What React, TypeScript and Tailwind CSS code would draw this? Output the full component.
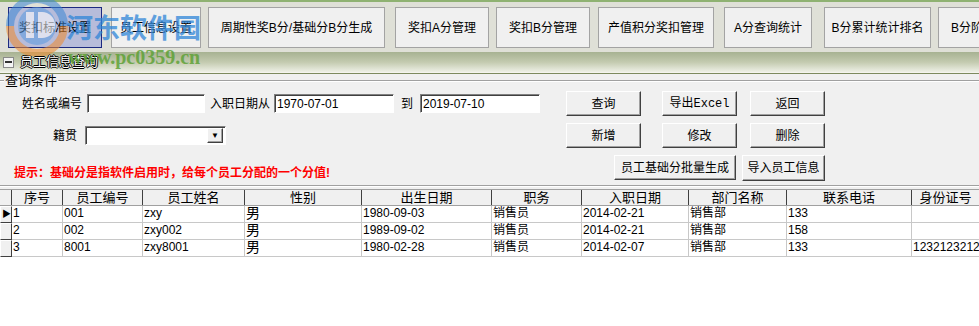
import React from 'react';

const FONT = 'font-["Liberation_Sans","Noto_Sans_CJK_SC",sans-serif]';

const tabs = [
  { label: '奖扣标准设置', cls: 'ml-[8px] w-[94px]', active: true },
  { label: '员工信息设置', cls: 'ml-[9px] w-[90px]' },
  { label: '周期性奖B分/基础分B分生成', cls: 'ml-[7px] w-[177px]' },
  { label: '奖扣A分管理', cls: 'ml-[10px] w-[94px]' },
  { label: '奖扣B分管理', cls: 'ml-[7px] w-[94px]' },
  { label: '产值积分奖扣管理', cls: 'ml-[8px] w-[116px]' },
  { label: 'A分查询统计', cls: 'ml-[10px] w-[88px]' },
  { label: 'B分累计统计排名', cls: 'ml-[12px] w-[107px]' },
  { label: 'B分阶段统计', cls: 'ml-[7px] w-[100px] justify-start pl-[12px]' },
];

const columns = [
  { title: '序号', w: 'w-[51px]' },
  { title: '员工编号', w: 'w-[80px]' },
  { title: '员工姓名', w: 'w-[102px]' },
  { title: '性别', w: 'w-[117px]' },
  { title: '出生日期', w: 'w-[130px]' },
  { title: '职务', w: 'w-[90px]' },
  { title: '入职日期', w: 'w-[107px]' },
  { title: '部门名称', w: 'w-[98px]' },
  { title: '联系电话', w: 'w-[125px]' },
  { title: '身份证号', w: 'w-[68px]' },
];

const rows = [
  ['1', '001', 'zxy', '男', '1980-09-03', '销售员', '2014-02-21', '销售部', '133', ''],
  ['2', '002', 'zxy002', '男', '1989-09-02', '销售员', '2014-02-21', '销售部', '158', ''],
  ['3', '8001', 'zxy8001', '男', '1980-02-28', '销售员', '2014-02-07', '销售部', '133', '12321232123'],
];

const sunken =
  'h-[19px] bg-white border border-t-[#808080] border-l-[#808080] border-b-white border-r-white shadow-[inset_1px_1px_0_#404040] px-[2px] flex items-center';
const raised =
  'bg-[#f0f0f0] border border-t-white border-l-white border-b-[#404040] border-r-[#404040] shadow-[inset_-1px_-1px_0_#a0a0a0] flex items-center justify-center';

function Btn({ children, cls }: { children: React.ReactNode; cls: string }) {
  return <div className={`${raised} h-[25px] w-[75px] text-[12px] ${cls}`}>{children}</div>;
}

function Watermark() {
  return (
    <div className="absolute left-0 top-0 pointer-events-none">
      <svg width="70" height="60" viewBox="0 0 70 60" className="absolute left-[2px] top-[-4px] opacity-55">
        <path d="M8 30 A27 27 0 0 1 62 30" fill="none" stroke="#3a86d4" strokeWidth="8" />
        <path d="M62 30 A27 27 0 0 1 8 30" fill="none" stroke="#f08a2c" strokeWidth="8" />
        <circle cx="35" cy="30" r="19" fill="#5a9be0" />
        <rect x="24" y="16" width="8" height="26" fill="#ffffff" />
        <path d="M36 16 h4 a13 13 0 0 1 0 26 h-4 z" fill="#ffffff" />
      </svg>
      <div className="absolute left-[66px] top-[12px] text-[27px] leading-[30px] font-bold text-[#2f86d8] opacity-75 font-['Noto_Sans_CJK_SC',sans-serif] whitespace-nowrap">
        河东软件园
      </div>
      <div className="absolute left-[68px] top-[47px] text-[20px] leading-[20px] font-bold text-[#5aa032] opacity-80 font-['Liberation_Serif',serif] whitespace-nowrap">
        www.pc0359.cn
      </div>
    </div>
  );
}

export default function App() {
  return (
    <div className={`relative w-[979px] h-[326px] overflow-hidden bg-white text-black text-[12px] ${FONT}`}>
      {/* top toolbar */}
      <div className="h-[52px] bg-[#dfe0d7] border-t-2 border-[#8fb272] flex items-start pt-[5px] overflow-hidden whitespace-nowrap">
        {tabs.map((t, i) => (
          <div
            key={i}
            className={`${t.cls} shrink-0 h-[41px] flex items-center justify-center text-[12px] border ${
              t.active ? 'bg-[#b7bcda] border-[#1c2a80]' : 'bg-[#f0f0f0] border-[#a3a3a3]'
            }`}
          >
            {t.label}
          </div>
        ))}
      </div>

      {/* section band */}
      <div className="h-[20px] bg-gradient-to-b from-[#a7b292] via-[#c3caaf] to-[#eef0e6] flex items-center">
        <div className="ml-[3px] w-[11px] h-[11px] bg-[#f4f4f4] border border-[#8a8a8a] flex items-center justify-center">
          <div className="w-[7px] h-[2px] bg-[#333]" />
        </div>
        <span className="ml-[6px] text-white text-[13px] [text-shadow:1px_0_0_#000,-1px_0_0_#000,0_1px_0_#000,0_-1px_0_#000]">
          员工信息查询
        </span>
      </div>
      <div className="h-[2px] bg-[#f4f4ee] border-b border-[#7d8a5e]" />

      {/* query area */}
      <div className="bg-[#f0f0f0] h-[115px] flex flex-col whitespace-nowrap">
        <div className="h-[14px] flex items-center">
          <div className="w-[4px] border-t border-[#a0a0a0] border-b border-b-white" />
          <span className="px-[1px] text-[13px] leading-[14px]">查询条件</span>
          <div className="flex-1 border-t border-[#a0a0a0] border-b border-b-white" />
        </div>

        <div className="mt-[3px] h-[25px] flex items-center">
          <span className="w-[82px] text-right text-[12px]">姓名或编号</span>
          <div className={`${sunken} ml-[5px] w-[118px]`} />
          <span className="ml-[5px] w-[64px] text-[12px]">入职日期从</span>
          <div className={`${sunken} w-[120px]`}>1970-07-01</div>
          <span className="ml-[7px] w-[19px] text-[12px]">到</span>
          <div className={`${sunken} w-[120px]`}>2019-07-10</div>
          <Btn cls="ml-[26px]">查询</Btn>
          <Btn cls="ml-[21px] font-['Liberation_Mono','Noto_Sans_CJK_SC',monospace]">导出Excel</Btn>
          <Btn cls="ml-[13px]">返回</Btn>
        </div>

        <div className="mt-[7px] h-[25px] flex items-center">
          <span className="w-[77px] text-right text-[12px]">籍贯</span>
          <div className={`${sunken} ml-[8px] w-[141px] justify-end px-0`}>
            <div className={`${raised} w-[16px] h-[15px] text-[8px]`}>▼</div>
          </div>
          <Btn cls="ml-[340px]">新增</Btn>
          <Btn cls="ml-[21px]">修改</Btn>
          <Btn cls="ml-[13px]">删除</Btn>
        </div>

        <div className="mt-[7px] h-[26px] flex items-end">
          <span className="ml-[14px] w-[600px] text-[12px] font-bold text-[#ff0000] leading-[14px] mb-[1px]">
            提示：基础分是指软件启用时，给每个员工分配的一个分值!
          </span>
          <div className={`${raised} h-[25px] w-[122px] text-[12px] mb-[1px]`}>员工基础分批量生成</div>
          <div className={`${raised} h-[26px] w-[83px] text-[12px] ml-[6px]`}>导入员工信息</div>
        </div>

        <div className="mt-[4px] border-t border-[#a0a0a0] border-b border-b-white" />
      </div>

      {/* data grid */}
      <div className="border-t border-[#a0a0a0] bg-white overflow-hidden">
        <div className="flex h-[16px] bg-[#f0f0f0] border-b border-[#a0a0a0] whitespace-nowrap">
          <div className="w-[12px] shrink-0 border-r border-[#404040]" />
          {columns.map((c) => (
            <div
              key={c.title}
              className={`${c.w} shrink-0 border-r border-[#404040] text-center text-[13px] leading-[15px]`}
            >
              {c.title}
            </div>
          ))}
        </div>
        {rows.map((r, ri) => (
          <div key={ri} className="flex h-[17px] whitespace-nowrap">
            <div className="w-[12px] shrink-0 bg-[#f0f0f0] border border-t-white border-l-white border-b-[#404040] border-r-[#404040] flex items-center">
              {ri === 0 && <span className="text-[9px] leading-none ml-[1px]">▶</span>}
            </div>
            {r.map((v, ci) => (
              <div
                key={ci}
                className={`${columns[ci].w} shrink-0 border-r border-b border-[#c8c8c8] pl-[1px] overflow-hidden leading-[15px] ${
                  ci === 3 ? 'text-[14px]' : 'text-[12px]'
                }`}
              >
                {v}
              </div>
            ))}
          </div>
        ))}
      </div>

      <Watermark />
    </div>
  );
}
